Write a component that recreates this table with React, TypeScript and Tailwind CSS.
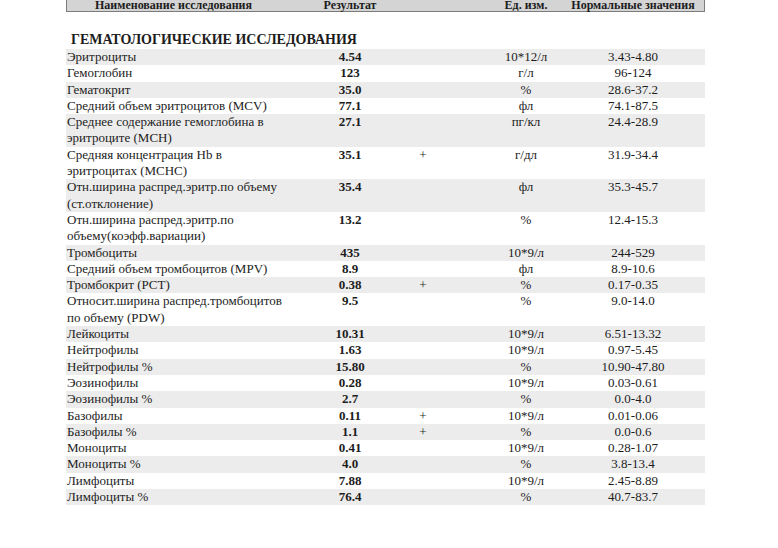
type Row = {
  name: string[];
  value: string;
  flag?: string;
  unit: string;
  norm: string;
};

const rows: Row[] = [
  { name: ["Эритроциты"], value: "4.54", unit: "10*12/л", norm: "3.43-4.80" },
  { name: ["Гемоглобин"], value: "123", unit: "г/л", norm: "96-124" },
  { name: ["Гематокрит"], value: "35.0", unit: "%", norm: "28.6-37.2" },
  { name: ["Средний объем эритроцитов (MCV)"], value: "77.1", unit: "фл", norm: "74.1-87.5" },
  { name: ["Среднее содержание гемоглобина в", "эритроците (MCH)"], value: "27.1", unit: "пг/кл", norm: "24.4-28.9" },
  { name: ["Средняя концентрация Hb в", "эритроцитах (MCHC)"], value: "35.1", flag: "+", unit: "г/дл", norm: "31.9-34.4" },
  { name: ["Отн.ширина распред.эритр.по объему", "(ст.отклонение)"], value: "35.4", unit: "фл", norm: "35.3-45.7" },
  { name: ["Отн.ширина распред.эритр.по", "объему(коэфф.вариации)"], value: "13.2", unit: "%", norm: "12.4-15.3" },
  { name: ["Тромбоциты"], value: "435", unit: "10*9/л", norm: "244-529" },
  { name: ["Средний объем тромбоцитов (MPV)"], value: "8.9", unit: "фл", norm: "8.9-10.6" },
  { name: ["Тромбокрит (PCT)"], value: "0.38", flag: "+", unit: "%", norm: "0.17-0.35" },
  { name: ["Относит.ширина распред.тромбоцитов", "по объему (PDW)"], value: "9.5", unit: "%", norm: "9.0-14.0" },
  { name: ["Лейкоциты"], value: "10.31", unit: "10*9/л", norm: "6.51-13.32" },
  { name: ["Нейтрофилы"], value: "1.63", unit: "10*9/л", norm: "0.97-5.45" },
  { name: ["Нейтрофилы %"], value: "15.80", unit: "%", norm: "10.90-47.80" },
  { name: ["Эозинофилы"], value: "0.28", unit: "10*9/л", norm: "0.03-0.61" },
  { name: ["Эозинофилы %"], value: "2.7", unit: "%", norm: "0.0-4.0" },
  { name: ["Базофилы"], value: "0.11", flag: "+", unit: "10*9/л", norm: "0.01-0.06" },
  { name: ["Базофилы %"], value: "1.1", flag: "+", unit: "%", norm: "0.0-0.6" },
  { name: ["Моноциты"], value: "0.41", unit: "10*9/л", norm: "0.28-1.07" },
  { name: ["Моноциты %"], value: "4.0", unit: "%", norm: "3.8-13.4" },
  { name: ["Лимфоциты"], value: "7.88", unit: "10*9/л", norm: "2.45-8.89" },
  { name: ["Лимфоциты %"], value: "76.4", unit: "%", norm: "40.7-83.7" },
];

export default function App() {
  return (
    <div className="w-[778px] h-[548px] overflow-hidden bg-white text-[#1c1c1c] font-['Liberation_Serif','Times_New_Roman',serif]">
      <div className="ml-[66px] w-[639px]">
        {/* header bar, top edge runs off the page */}
        <div className="-mt-[1px] h-[13px] flex items-end bg-[#d4d4d4] border border-[#7c7c7c] text-[12px] font-bold leading-[11px]">
          <div className="w-[213px] text-center whitespace-nowrap">Наименование исследования</div>
          <div className="w-[140px] text-center whitespace-nowrap">Результат</div>
          <div className="w-[63px]" />
          <div className="w-[86px] text-center whitespace-nowrap">Ед. изм.</div>
          <div className="w-[128px] text-center whitespace-nowrap">Нормальные значения</div>
        </div>

        <div className="mt-[19px] pl-[5px] text-[14px] font-bold leading-[18px]">
          ГЕМАТОЛОГИЧЕСКИЕ ИССЛЕДОВАНИЯ
        </div>

        <div className="text-[13px] leading-[16.3px]">
          {rows.map((r, i) => (
            <div
              key={i}
              className={`flex items-start ${i % 2 === 0 ? "bg-[#ececec]" : "bg-white"}`}
            >
              <div className="w-[230px] pl-[1px] whitespace-nowrap">
                {r.name.map((l, j) => (
                  <div key={j}>{l}</div>
                ))}
              </div>
              <div className="w-[108px] flex justify-center font-bold whitespace-nowrap">
                {r.value}
              </div>
              <div className="w-[38px] flex justify-center">{r.flag ?? ""}</div>
              <div className="w-[49px]" />
              <div className="w-[70px] flex justify-center whitespace-nowrap">{r.unit}</div>
              <div className="w-[144px] flex justify-center whitespace-nowrap">{r.norm}</div>
            </div>
          ))}
        </div>
      </div>
    </div>
  );
}
